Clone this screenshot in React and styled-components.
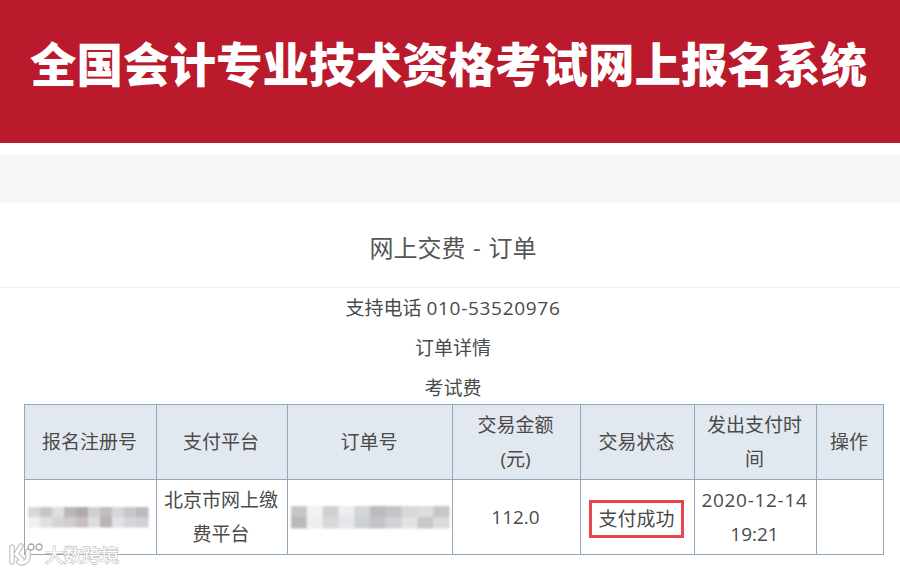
import React from 'react';
import styled, { createGlobalStyle } from 'styled-components';

const GlobalStyle = createGlobalStyle`
  html, body {
    margin: 0;
    padding: 0;
    background: #fff;
    overflow: hidden;
  }
  body {
    font-family: "Open Sans", "Noto Sans CJK SC", sans-serif;
    color: #4a4a4a;
  }
`;

const columns = [132, 131, 165, 128, 114, 122, 67];

const regMosaic = [
  ['#d8d8da', '#c4c6cc', '#e0e0e2', '#b8b6b8', '#b0aaa8', '#cfd0d4', '#c0bcbc', '#d6d6da', '#c4c8cc', '#b8bcc2'],
  ['#f0f0f0', '#e0e0e2', '#d6d4d4', '#d0cccc', '#c6c0be', '#dcdcdc', '#b8b4b4', '#e2e2e4', '#d6d6d8', '#d0d0d4'],
];

const orderMosaic = [
  ['#c8c6c4', '#f2f2f2', '#d0d0d2', '#ecedef', '#d2d6da', '#bcbcc0', '#c4c4c8', '#d8d8da', '#dededf', '#c4c6c8'],
  ['#bcbab8', '#eeeeee', '#d8d8da', '#e4e6ea', '#ccd0d4', '#c4c4c8', '#d2d2d4', '#e2e2e4', '#c8c8ca', '#d8dadc'],
];

const Mosaic = ({ rows, width, height, shift = 0 }) => {
  const cellW = width / rows[0].length;
  const cellH = height / rows.length;
  return (
    <MosaicSvg $shift={shift} width={width} height={height + 12} viewBox={`0 -6 ${width} ${height + 12}`}>
      <filter id={`blur-${width}`}>
        <feGaussianBlur stdDeviation="0.9" />
      </filter>
      <g filter={`url(#blur-${width})`}>
        {rows.map((row, r) =>
          row.map((color, c) => (
            <rect key={`${r}-${c}`} x={c * cellW} y={r * cellH} width={cellW + 0.5} height={cellH + 0.5} fill={color} />
          ))
        )}
      </g>
    </MosaicSvg>
  );
};

const App = () => (
  <Page>
    <GlobalStyle />
    <Banner>
      <BannerTitle>全国会计专业技术资格考试网上报名系统</BannerTitle>
    </Banner>
    <GreyBar />
    <Heading>网上交费 - 订单</Heading>
    <InfoBlock>
      <InfoLine>支持电话 <Digits>010-53520976</Digits></InfoLine>
      <InfoLine>订单详情</InfoLine>
      <InfoLine>考试费</InfoLine>
    </InfoBlock>
    <TableWrap>
      <OrderTable>
        <colgroup>
          {columns.map((w, i) => (
            <col key={i} style={{ width: w }} />
          ))}
        </colgroup>
        <thead>
          <tr>
            <th>报名注册号</th>
            <th>支付平台</th>
            <th>订单号</th>
            <th>交易金额<br />(元)</th>
            <th>交易状态</th>
            <th>发出支付时<br />间</th>
            <th>操作</th>
          </tr>
        </thead>
        <tbody>
          <tr>
            <td><Mosaic rows={regMosaic} width={120} height={20} shift={-3} /></td>
            <td>北京市网上缴<br />费平台</td>
            <td><Mosaic rows={orderMosaic} width={158} height={22} /></td>
            <td>112.0</td>
            <td><StatusBox>支付成功</StatusBox></td>
            <td><Digits>2020-12-14</Digits><br />19:21</td>
            <td></td>
          </tr>
        </tbody>
      </OrderTable>
    </TableWrap>
    <Watermark>
      <svg width="36" height="24" viewBox="0 0 36 24" fill="none" strokeLinecap="round" strokeLinejoin="round">
        <g stroke="#c2c2c2" strokeWidth="5.6">
          <path d="M4 5v15M13 4l-5 8 6 6" />
          <path d="M20 9v6a6 6 0 0 1-9 5" />
        </g>
        <g stroke="#fff" strokeWidth="3.2">
          <path d="M4 5v15M13 4l-5 8 6 6" />
          <path d="M20 9v6a6 6 0 0 1-9 5" />
        </g>
        <circle cx="23" cy="5" r="3" stroke="#a8a8a8" strokeWidth="1.3" fill="#fff" />
        <circle cx="31" cy="5" r="3" stroke="#a8a8a8" strokeWidth="1.3" fill="#fff" />
      </svg>
      <WatermarkText>大数跨境</WatermarkText>
    </Watermark>
  </Page>
);

const Page = styled.div`
  position: relative;
  width: 900px;
  height: 570px;
  overflow: hidden;
  background: #fff;
`;

const Banner = styled.header`
  height: 143px;
  background: #ba1a2c;
  display: flex;
  align-items: center;
  justify-content: center;
  padding: 0 3px 19px 0;
  box-sizing: border-box;
`;

const BannerTitle = styled.h1`
  margin: 0;
  font-family: "Noto Sans CJK SC", sans-serif;
  font-size: 46.5px;
  font-weight: 900;
  line-height: 1;
  color: #fff;
  white-space: nowrap;
`;

const GreyBar = styled.div`
  height: 48px;
  margin-top: 12px;
  background: #f6f6f6;
`;

const Heading = styled.h2`
  margin: 0;
  height: 85px;
  padding-left: 6px;
  line-height: 90px;
  box-sizing: border-box;
  border-bottom: 1px solid #eee;
  text-align: center;
  font-size: 24px;
  font-weight: 400;
  word-spacing: 1.5px;
  color: #555;
`;

const InfoBlock = styled.div`
  padding-left: 6px;
  text-align: center;
`;

const InfoLine = styled.div`
  height: 40px;
  line-height: 40px;
  font-size: 19px;
`;

const Digits = styled.span`
  letter-spacing: 0.7px;
`;

const TableWrap = styled.div`
  margin-top: -4px;
  padding-left: 24px;
`;

const OrderTable = styled.table`
  width: 859px;
  table-layout: fixed;
  border-collapse: collapse;
  font-size: 19px;
  line-height: 34px;
  text-align: center;

  th, td {
    border: 1px solid #93a8bc;
    padding: 3px 2px 3px 0;
    overflow: visible;
    font-weight: 400;
  }

  thead tr {
    background: #e2e8ef;
    height: 75px;
  }

  tbody tr {
    height: 73px;
  }

  td:nth-child(1), td:nth-child(3) {
    padding: 0;
  }
`;

const MosaicSvg = styled.svg`
  display: block;
  margin: 0 auto;
  overflow: visible;
  transform: translateX(${(p) => p.$shift}px);
`;

const StatusBox = styled.span`
  display: inline-block;
  margin-top: 4px;
  padding: 0 6.5px;
  border: 3px solid #e8454e;
  line-height: 32px;
  white-space: nowrap;
`;

const Watermark = styled.div`
  position: absolute;
  left: 8px;
  top: 542px;
  display: flex;
  align-items: center;
  gap: 1px;
`;

const WatermarkText = styled.span`
  font-family: "Noto Sans CJK SC", sans-serif;
  font-size: 18.5px;
  line-height: 24px;
  color: #fff;
  -webkit-text-stroke: 1.4px #c4c4c4;
  paint-order: stroke fill;
`;

export default App;
